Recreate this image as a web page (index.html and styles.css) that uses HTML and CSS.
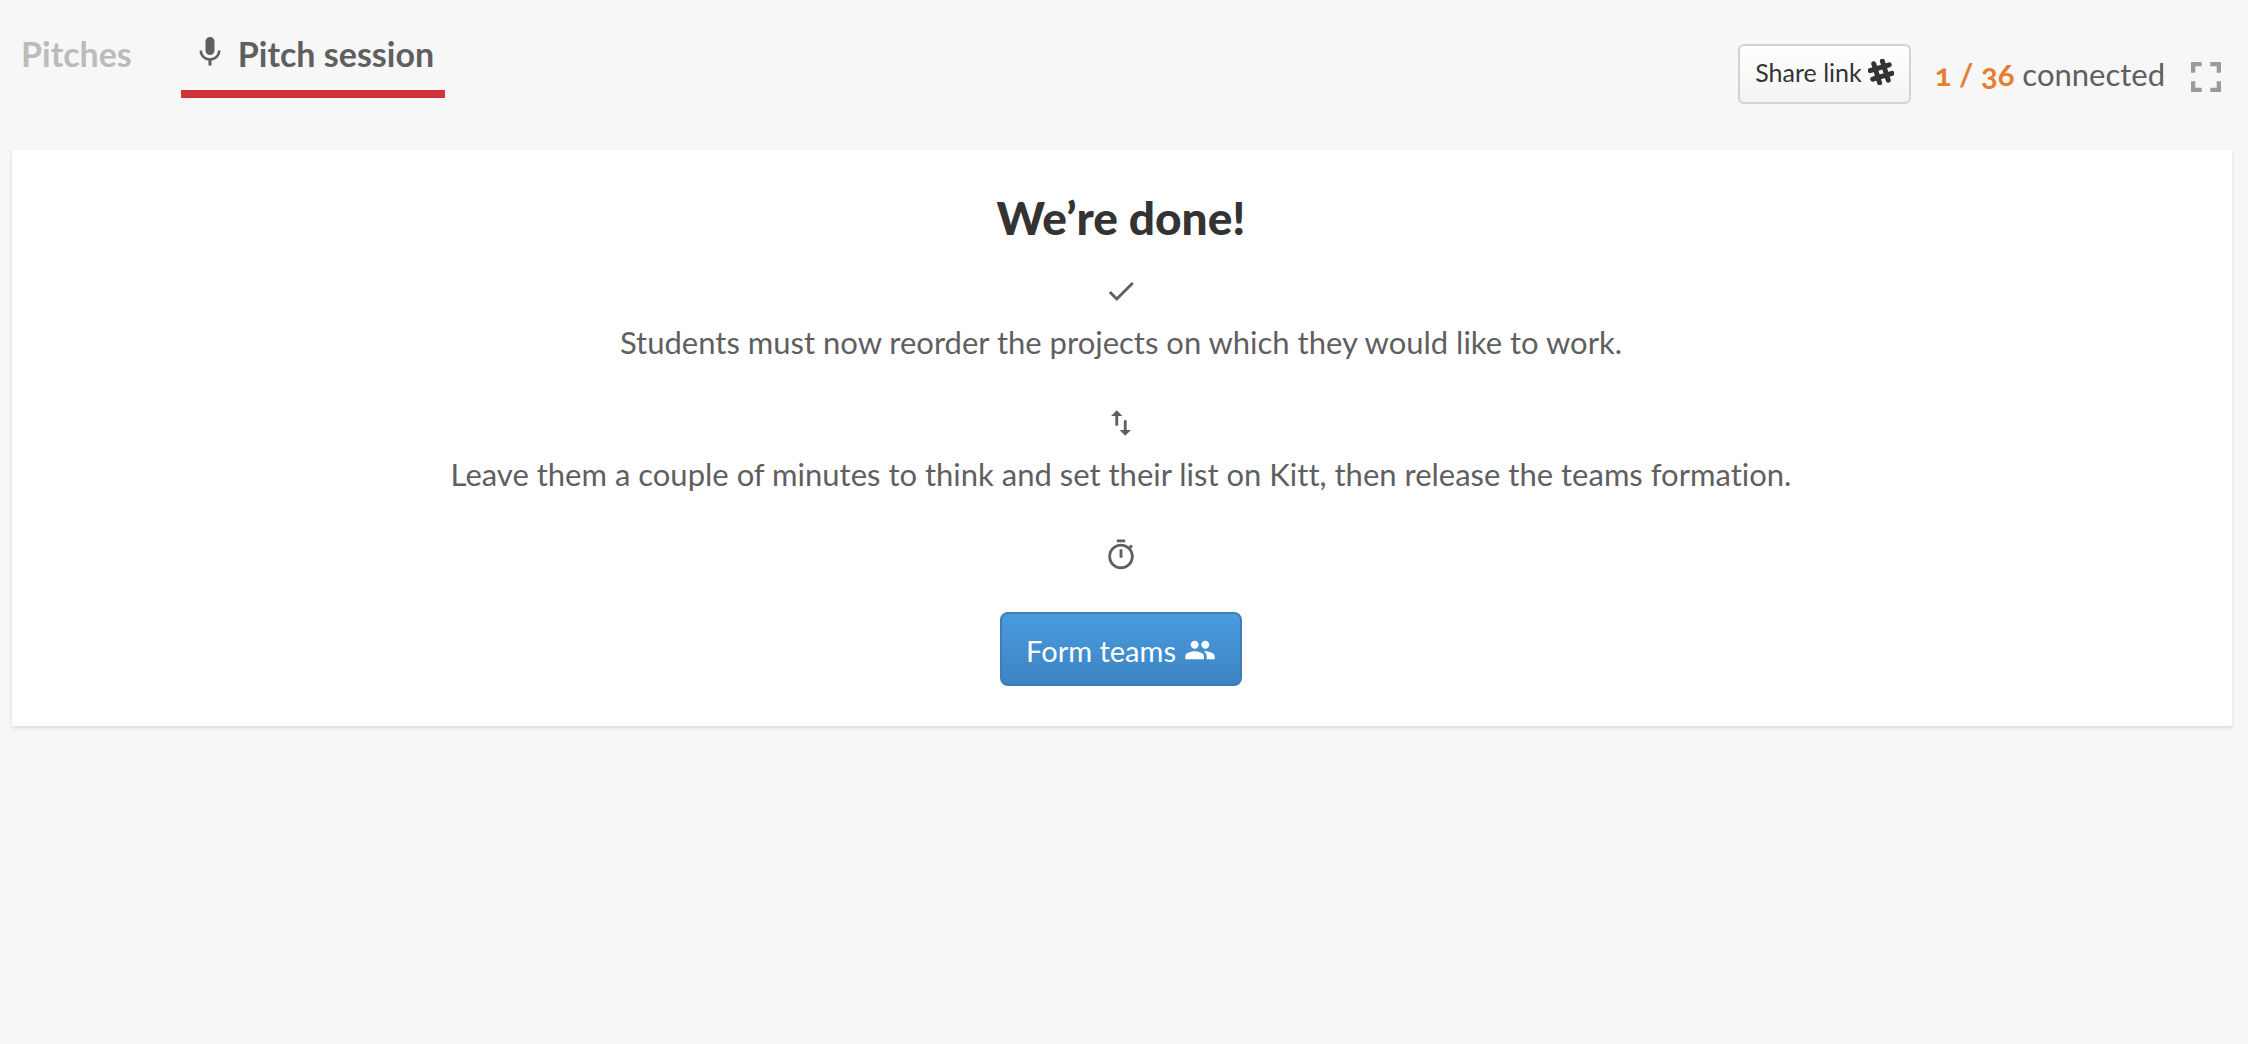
FILE: index.html
```html
<!DOCTYPE html>
<html lang="en">
<head>
<meta charset="utf-8">
<title>Pitch session</title>
<link rel="stylesheet" href="styles.css">
</head>
<body>
<header class="topbar">
  <nav class="tabs">
    <a class="tab" href="#pitches">Pitches</a>
    <a class="tab tab-active" href="#session" aria-current="page">
      <svg class="icon-mic" viewBox="0 0 24 24" aria-hidden="true"><path d="M12 14c1.66 0 2.99-1.34 2.99-3L15 5c0-1.66-1.34-3-3-3S9 3.34 9 5v6c0 1.66 1.34 3 3 3zm5.3-3c0 3-2.54 5.1-5.3 5.1S6.7 14 6.7 11H5c0 3.41 2.72 6.23 6 6.72V21h2v-3.28c3.28-.48 6-3.3 6-6.72h-1.7z"/></svg>
      <span>Pitch session</span>
    </a>
  </nav>
  <div class="actions">
    <button class="btn btn-share" type="button">
      <span>Share link</span>
      <svg class="icon-slack" viewBox="0 0 26 26" aria-hidden="true"><g transform="rotate(-17 13 13)"><path d="M8.500 3v20M17.500 3v20M3 8.500h20M3 17.500h20"/></g></svg>
    </button>
    <p class="counter"><strong>1 / 36</strong> connected</p>
    <button class="btn-fullscreen" type="button" aria-label="Fullscreen">
      <svg class="icon-fullscreen" viewBox="5 5 14 14" aria-hidden="true"><path d="M7 14H5v5h5v-2H7v-3zm-2-4h2V7h3V5H5v5zm12 7h-3v2h5v-5h-2v3zM14 5v2h3v3h2V5h-5z"/></svg>
    </button>
  </div>
</header>
<main class="card">
  <h1>We’re done!</h1>
  <svg class="icon-step" viewBox="0 0 24 24" aria-hidden="true"><path d="M9 16.17L4.83 12l-1.42 1.41L9 19 21 7l-1.41-1.41z"/></svg>
  <p class="step">Students must now reorder the projects on which they would like to work.</p>
  <svg class="icon-step" viewBox="0 0 24 24" aria-hidden="true"><path d="M9 3L5 6.99h3V14h2V6.99h3L9 3zm7 14.01V10h-2v7.01h-3L15 21l4-3.99h-3z"/></svg>
  <p class="step">Leave them a couple of minutes to think and set their list on Kitt, then release the teams formation.</p>
  <svg class="icon-step" viewBox="0 0 24 24" aria-hidden="true"><path d="M15 1H9v2h6V1zm-4 13h2V8h-2v6zm8.03-6.61l1.42-1.42c-.43-.51-.9-.99-1.41-1.41l-1.42 1.42C16.07 4.74 14.12 4 12 4c-4.97 0-9 4.03-9 9s4.02 9 9 9 9-4.03 9-9c0-2.12-.74-4.07-1.97-5.61zM12 20c-3.87 0-7-3.13-7-7s3.13-7 7-7 7 3.13 7 7-3.13 7-7 7z"/></svg>
  <button class="btn btn-primary" type="button">
    <span>Form teams</span>
    <svg class="icon-people" viewBox="0 0 24 24" aria-hidden="true"><path d="M16 11c1.66 0 2.99-1.34 2.99-3S17.66 5 16 5c-1.66 0-3 1.34-3 3s1.34 3 3 3zm-8 0c1.66 0 2.99-1.34 2.99-3S9.66 5 8 5C6.34 5 5 6.34 5 8s1.34 3 3 3zm0 2c-2.33 0-7 1.17-7 3.5V19h14v-2.5c0-2.33-4.67-3.5-7-3.5zm8 0c-.29 0-.62.02-.97.05 1.16.84 1.97 1.97 1.97 3.45V19h6v-2.5c0-2.33-4.67-3.5-7-3.5z"/></svg>
  </button>
</main>
</body>
</html>
```

FILE: styles.css
```css
* {
  box-sizing: border-box;
}

body {
  min-height: 100vh;
  margin: 0;
  background: #f7f7f7;
  color: #5f5f5f;
  font-family: Lato, "Open Sans", sans-serif;
  font-size: 31px;
  line-height: 44px;
  font-variant-numeric: oldstyle-nums;
  font-variant-ligatures: none;
}

svg {
  display: block;
  flex: none;
  fill: currentColor;
}

h1,
p {
  margin: 0;
}

.topbar {
  display: flex;
  justify-content: space-between;
  align-items: flex-start;
  padding: 0 27px 46px 0;
}

.tabs {
  display: flex;
  gap: 28px;
}

.tab {
  display: flex;
  align-items: center;
  height: 98px;
  padding: 18px 21px 0;
  border-bottom: 8px solid transparent;
  color: #bbb;
  font-size: 34px;
  font-weight: 700;
  text-decoration: none;
}

.tab-active {
  gap: 10px;
  padding: 18px 11px 0;
  border-color: #d03438;
  color: #5f5f5f;
}

.icon-mic {
  width: 36px;
  height: 36px;
  margin-bottom: 4px;
}

.actions {
  display: flex;
  align-items: center;
  padding-top: 44px;
}

.btn {
  display: flex;
  align-items: center;
  border: 2px solid;
  font-family: inherit;
  cursor: pointer;
}

.btn-share {
  gap: 6px;
  height: 60px;
  padding: 0 15px 4px;
  border-color: #d3d3d3;
  border-radius: 6px;
  background: linear-gradient(#fff, #f3f3f3);
  color: #333;
  font-size: 25px;
}

.icon-slack {
  width: 26px;
  height: 26px;
  fill: none;
  stroke: currentColor;
  stroke-width: 5;
  stroke-linecap: round;
}

.counter {
  margin-left: 24px;
}

.counter strong {
  color: #e67e30;
}

.btn-fullscreen {
  margin-left: 26px;
  padding: 6px 0 0;
  border: 0;
  background: none;
  color: #9b9b9b;
  cursor: pointer;
}

.icon-fullscreen {
  width: 30px;
  height: 30px;
}

.card {
  display: flex;
  flex-direction: column;
  align-items: center;
  margin: 0 16px 0 12px;
  padding: 38px 26px 40px 24px;
  background: #fff;
  box-shadow: 0 2px 4px rgba(0, 0, 0, 0.12);
  text-align: center;
}

h1 {
  margin-bottom: 26px;
  color: #333;
  font-size: 46px;
  font-weight: 900;
  line-height: 60px;
}

.icon-step {
  width: 34px;
  height: 34px;
}

.step {
  margin: 12px 0 42px;
}

.btn-primary {
  gap: 8px;
  height: 74px;
  margin-top: 40px;
  padding: 2px 24px 0;
  border-color: #3f7cba;
  border-radius: 8px;
  background: linear-gradient(#4a9be0, #3c84c0);
  color: #fff;
  font-size: 29px;
}

.icon-people {
  width: 32px;
  height: 32px;
}
```
